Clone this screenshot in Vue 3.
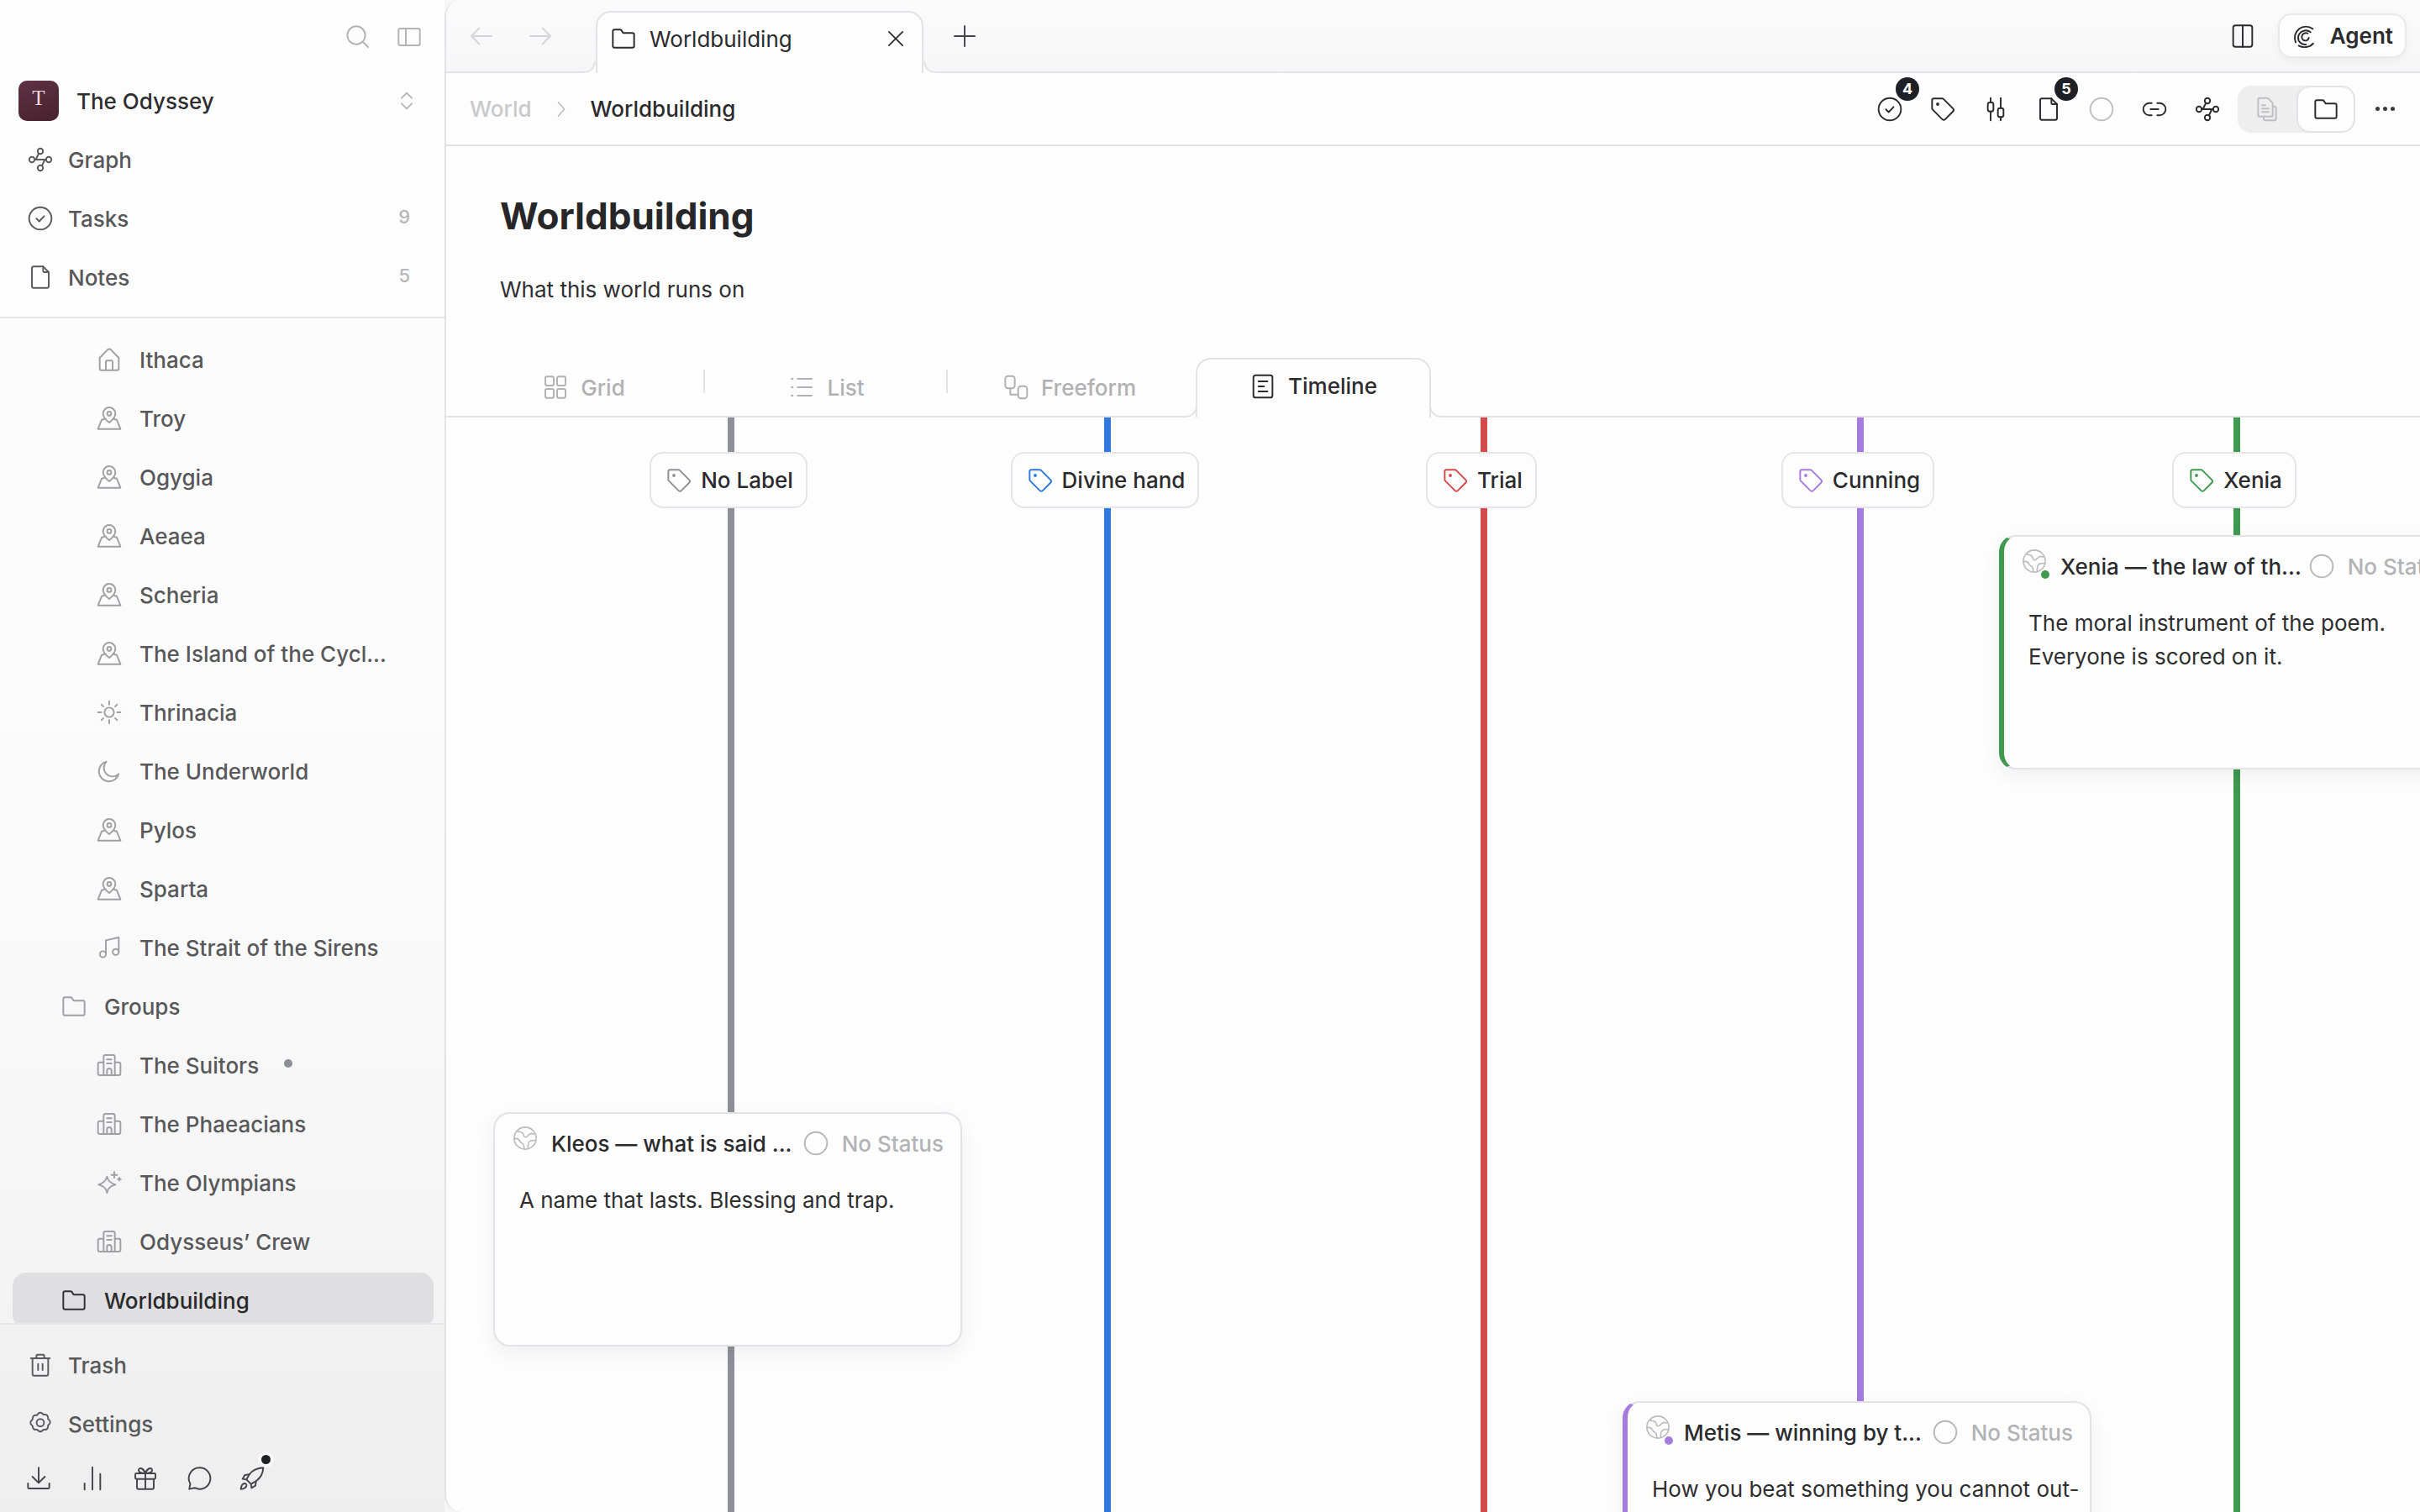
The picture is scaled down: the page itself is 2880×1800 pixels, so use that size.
<script setup>
// icon bodies, all drawn on a 24 unit box
const icons = {
  search: '<circle cx="10.5" cy="10.5" r="8"/><path d="M16.5 16.5 21 21"/>',
  panel: '<rect x="2.5" y="4.5" width="19" height="15" rx="1.5"/><path d="M9 4.5v15"/>',
  updown: '<path d="M7.5 9.5 12 5l4.5 4.5M7.5 14.5 12 19l4.5-4.5"/>',
  graph: '<circle cx="12" cy="4.5" r="2.4"/><circle cx="4.5" cy="12" r="2.4"/><circle cx="19.5" cy="12" r="2.4"/><circle cx="12" cy="19.5" r="2.4"/><path d="M6.9 12h10.2M10.6 6.4 8 12M13.4 17.6 16 12"/>',
  check: '<circle cx="12" cy="12" r="10"/><path d="M8.6 12.2l2.4 2.4 4.4-4.6"/>',
  note: '<path d="M6 2.5h8.5l5 5V20a1.5 1.5 0 0 1-1.5 1.5H6A1.5 1.5 0 0 1 4.5 20V4A1.5 1.5 0 0 1 6 2.5z"/><path d="M14.5 2.5V6.500a1 1 0 0 0 1 1h4"/>',
  home: '<path d="M3.500 10.500 10.500 3.300a2 2 0 0 1 3 0l7 7.200V20a1.500 1.500 0 0 1-1.500 1.500H5A1.500 1.500 0 0 1 3.500 20z"/><path d="M9 21.500V14a1 1 0 0 1 1-1h4a1 1 0 0 1 1 1v7.500"/>',
  pin: '<path d="M12 15.800C9 13.300 6.500 10.700 6.500 7.800a5.500 5.500 0 0 1 11 0c0 2.900-2.500 5.500-5.500 8z"/><circle cx="12" cy="7.800" r="1.800"/><path d="M7.500 12.800 5.300 13.300 2 21.500h20l-3.300-8.200-2.200-.5"/>',
  sun: '<circle cx="12" cy="12" r="4.200"/><path d="M12 2v3M12 19v3M2 12h3M19 12h3M5 5l1.800 1.800M17.200 17.200 19 19M5 19l1.800-1.800M17.200 6.800 19 5"/>',
  moon: '<path d="M20.500 14.500A9 9 0 1 1 9.500 3.500a7.500 7.500 0 0 0 11 11z"/>',
  music: '<path d="M9 18V5.500l11.500-2.500V16"/><circle cx="6.300" cy="18" r="2.700"/><circle cx="17.800" cy="16" r="2.700"/>',
  folder: '<path d="M2.500 5.500A1.500 1.500 0 0 1 4 4h5a1.500 1.500 0 0 1 1.200.6L11.700 7H20a1.500 1.500 0 0 1 1.500 1.500v10A1.500 1.500 0 0 1 20 20H4a1.500 1.500 0 0 1-1.500-1.500z"/>',
  building: '<path d="M7 21V4.500A1.500 1.500 0 0 1 8.500 3h7A1.500 1.500 0 0 1 17 4.500V21"/><path d="M7 9.500H3.500A1.500 1.500 0 0 0 2 11v8.500A1.500 1.500 0 0 0 3.500 21h17a1.500 1.500 0 0 0 1.500-1.500V11a1.500 1.500 0 0 0-1.500-1.500H17"/><path d="M10 7h4M10 10.500h4M10 21v-4a2 2 0 0 1 4 0v4"/>',
  sparkle: '<path d="M10 6.500c.8 3.800 2.600 5.800 7.500 7.200-4.900 1.500-6.700 3.200-7.500 7.300-.8-4.100-2.600-5.800-7.500-7.300C7.400 12.300 9.200 10.300 10 6.500z"/><path d="M16.500 2.500v5M14 5h5M21 7.500v2.600M19.700 8.800h2.600"/>',
  trash: '<path d="M3.500 6h17M8.500 6V3.800a1 1 0 0 1 1-1h5a1 1 0 0 1 1 1V6M5 6v14a1.500 1.500 0 0 0 1.500 1.500h11A1.500 1.500 0 0 0 19 20V6M10 11v5.500M14 11v5.500"/>',
  gear: '<path d="M10.200 2.800a2.500 2.500 0 0 1 3.600 0l1 1h1.500a2.500 2.500 0 0 1 2.500 2.500l.2 1.400 1 1a2.500 2.500 0 0 1 0 3.600l-1 1-.2 1.400a2.500 2.500 0 0 1-2.500 2.500h-1.500l-1 1a2.500 2.500 0 0 1-3.600 0l-1-1H7.700a2.500 2.500 0 0 1-2.500-2.500L5 13.800l-1-1a2.500 2.500 0 0 1 0-3.600l1-1 .2-1.400a2.500 2.500 0 0 1 2.500-2.500h1.500z"/><circle cx="12" cy="11" r="3.300"/>',
  download: '<path d="M12 2.500v13M6.500 10.500l5.500 5.500 5.500-5.500M2.500 16.500v3.500a1 1 0 0 0 1 1h17a1 1 0 0 0 1-1v-3.500"/>',
  bars: '<path d="M5 16.500V22M12 2v20M19 8v14"/>',
  gift: '<rect x="3" y="7.500" width="18" height="5" rx="1"/><path d="M4.500 12.500V20a1.500 1.500 0 0 0 1.500 1.500h12a1.500 1.500 0 0 0 1.500-1.500v-7.500M12 7.500v14M12 7.500C10.500 3 6.500 1.500 6 4.500c-.3 2 2.500 3 6 3zM12 7.500C13.500 3 17.500 1.500 18 4.500c.3 2-2.500 3-6 3z"/>',
  chat: '<path d="M12.500 2.500a9.500 9.500 0 1 1-4.400 17.900L3.200 21.500l.9-4.700A9.500 9.500 0 0 1 12.500 2.500z"/>',
  rocket: '<path d="M22 2.500c-5.500.3-9.800 2.300-12.500 6L7 13l4 4 4.500-2.500c3.700-2.700 6.200-6.500 6.500-12z"/><path d="M9.500 8.500 5.500 9 3.500 12.500 7 13M15.500 14.500 15 18.500 11.500 20.500 11 17"/><path d="M5 16.500c-1.800.5-2.800 2.300-3 5 2.700-.2 4.500-1.200 5-3 .3-1.200-.8-2.300-2-2z"/>',
  tag: '<path d="M4 2.500h7.500a2 2 0 0 1 1.400.6l8.200 8.200a2 2 0 0 1 0 2.800l-6.800 6.800a2 2 0 0 1-2.800 0L3.100 12.500a2 2 0 0 1-.6-1.400V4A1.500 1.500 0 0 1 4 2.500z"/><circle cx="7.500" cy="7.500" r=".7"/>',
  sliders: '<path d="M7.500 2v4M7.500 14v8M16.500 2v9M16.500 19v3"/><rect x="5" y="6" width="5" height="8" rx="1.800"/><rect x="14" y="11" width="5" height="8" rx="1.800"/>',
  link: '<path d="M9.500 6.500H7.500a5.500 5.500 0 0 0 0 11h2M14.500 6.500h2a5.500 5.500 0 0 1 0 11h-2M8.500 12h7"/>',
  docs: '<path d="M5.500 2h7l4.500 4.500V17a1.500 1.500 0 0 1-1.500 1.500h-10A1.500 1.500 0 0 1 4 17V3.500A1.500 1.500 0 0 1 5.500 2z"/><path d="M7.500 8.500h3M7.500 11.500h6M7.500 14.500h6M17 9.500h1.500A1.500 1.500 0 0 1 20 11v9.500a1.500 1.500 0 0 1-1.500 1.500h-8A1.500 1.500 0 0 1 9 20.500v-2"/>',
  split: '<rect x="3.500" y="2.500" width="17" height="19" rx="2"/><path d="M12 2.500v19"/>',
  spiral: '<path d="M19 5.500A10 10 0 0 0 3.800 17.500 M6.500 20.500c4 2.300 10 1.700 13-2"/><path d="M17 8.500a6.800 6.800 0 0 0-11 4.500c-.3 3.800 3 7 7 6.500"/><path d="M14.500 9.500a3.800 3.800 0 0 0-5.300 3c-.1 2.300 2 4 4.300 3.400a3 3 0 0 0 2-2.400"/>',
  grid: '<rect x="3" y="2.500" width="7.500" height="8" rx="1.500"/><rect x="13.500" y="2.500" width="7.500" height="8" rx="1.500"/><rect x="3" y="13.500" width="7.500" height="8" rx="1.500"/><rect x="13.500" y="13.500" width="7.500" height="8" rx="1.500"/>',
  list: '<path d="M8.500 4.500H21M8.500 12H21M8.500 19.500H21M3 4.500h1M3 12h1M3 19.500h1"/>',
  freeform: '<rect x="2.500" y="2" width="8.500" height="11" rx="2.500"/><rect x="14" y="11" width="8" height="11" rx="2.500"/><path d="M7 13v5.500h7"/>',
  timeline: '<rect x="3.500" y="2" width="17" height="20" rx="2"/><path d="M8 7.500h8M8 12h5M8 16.500h8"/>',
  globe: '<circle cx="12" cy="12" r="10.500"/><path d="M4.500 5c2 1.500 3 .5 5 2s0 3.500 2.500 4c2.500.4 3-3.500 6-3.500l2.500.5M2 12.500c2.500-.8 4 .3 5 2.500s3 1.500 3.500 3.500.5 3.500.5 3.500M14.500 22c.5-3 0-4 1-6s3-2 6-2"/>',
  back: '<path d="M21 12H3M10 5l-7 7 7 7"/>',
  forward: '<path d="M3 12h18M14 5l7 7-7 7"/>',
  close: '<path d="M5 5l14 14M19 5 5 19"/>',
  plus: '<path d="M12 3v18M3 12h18"/>',
  chevron: '<path d="M8 3l8 9-8 9"/>',
}

const navTop = [
  { icon: 'graph', label: 'Graph' },
  { icon: 'check', label: 'Tasks', count: 9 },
  { icon: 'note', label: 'Notes', count: 5 },
]

const tree = [
  { icon: 'home', label: 'Ithaca', sub: true },
  { icon: 'pin', label: 'Troy', sub: true },
  { icon: 'pin', label: 'Ogygia', sub: true },
  { icon: 'pin', label: 'Aeaea', sub: true },
  { icon: 'pin', label: 'Scheria', sub: true },
  { icon: 'pin', label: 'The Island of the Cycl...', sub: true },
  { icon: 'sun', label: 'Thrinacia', sub: true },
  { icon: 'moon', label: 'The Underworld', sub: true },
  { icon: 'pin', label: 'Pylos', sub: true },
  { icon: 'pin', label: 'Sparta', sub: true },
  { icon: 'music', label: 'The Strait of the Sirens', sub: true },
  { icon: 'folder', label: 'Groups' },
  { icon: 'building', label: 'The Suitors', sub: true, dot: true },
  { icon: 'building', label: 'The Phaeacians', sub: true },
  { icon: 'sparkle', label: 'The Olympians', sub: true },
  { icon: 'building', label: 'Odysseus’ Crew', sub: true },
  { icon: 'folder', label: 'Worldbuilding', active: true },
]

const columns = [
  {
    label: 'No Label',
    color: '#8e9098',
    card: { top: 827, title: 'Kleos — what is said ...', body: ['A name that lasts. Blessing and trap.'] },
  },
  { label: 'Divine hand', color: '#2f78dc' },
  { label: 'Trial', color: '#d24a4a' },
  {
    label: 'Cunning',
    color: '#a67be0',
    card: { top: 1171, marked: true, title: 'Metis — winning by t...', body: ['How you beat something you cannot out-'] },
  },
  {
    label: 'Xenia',
    color: '#3f9a4f',
    card: { top: 140, marked: true, title: 'Xenia — the law of th...', body: ['The moral instrument of the poem.', 'Everyone is scored on it.'] },
  },
]

const tools = [
  { icon: 'check', badge: 4 },
  { icon: 'tag' },
  { icon: 'sliders' },
  { icon: 'note', badge: 5 },
  { icon: 'circle' },
  { icon: 'link' },
  { icon: 'graph' },
]
icons.circle = '<circle cx="12" cy="12" r="10"/>'

const views = [
  { icon: 'grid', label: 'Grid' },
  { icon: 'list', label: 'List' },
  { icon: 'freeform', label: 'Freeform' },
]
</script>

<template>
  <div class="app">
    <aside class="sidebar">
      <div class="side-top">
        <svg class="ic soft" viewBox="0 0 24 24" v-html="icons.search"></svg>
        <svg class="ic soft" viewBox="0 0 24 24" v-html="icons.panel"></svg>
      </div>
      <div class="workspace">
        <span class="avatar">T</span>
        <span class="ws-name">The Odyssey</span>
        <svg class="ic soft updown" viewBox="0 0 24 24" v-html="icons.updown"></svg>
      </div>
      <div v-for="item in navTop" :key="item.label" class="nav-row">
        <svg class="ic" viewBox="0 0 24 24" v-html="icons[item.icon]"></svg>
        <span class="nav-label">{{ item.label }}</span>
        <span v-if="item.count" class="count">{{ item.count }}</span>
      </div>

      <div class="tree">
        <div
          v-for="row in tree"
          :key="row.label"
          class="tree-row"
          :class="{ sub: row.sub, active: row.active }"
        >
          <svg class="ic" viewBox="0 0 24 24" v-html="icons[row.icon]"></svg>
          <span class="tree-label">{{ row.label }}</span>
          <span v-if="row.dot" class="tree-dot"></span>
        </div>
      </div>

      <div class="side-foot">
        <div class="nav-row">
          <svg class="ic" viewBox="0 0 24 24" v-html="icons.trash"></svg>
          <span class="nav-label">Trash</span>
        </div>
        <div class="nav-row">
          <svg class="ic" viewBox="0 0 24 24" v-html="icons.gear"></svg>
          <span class="nav-label">Settings</span>
        </div>
        <div class="foot-icons">
          <svg class="ic" viewBox="0 0 24 24" v-html="icons.download"></svg>
          <svg class="ic" viewBox="0 0 24 24" v-html="icons.bars"></svg>
          <svg class="ic" viewBox="0 0 24 24" v-html="icons.gift"></svg>
          <svg class="ic" viewBox="0 0 24 24" v-html="icons.chat"></svg>
          <span class="rocket">
            <svg class="ic" viewBox="0 0 24 24" v-html="icons.rocket"></svg>
            <i class="rocket-dot"></i>
          </span>
        </div>
      </div>
    </aside>

    <main class="main">
      <div class="tabbar">
        <svg class="ic faint" viewBox="0 0 24 24" v-html="icons.back"></svg>
        <svg class="ic faint" viewBox="0 0 24 24" v-html="icons.forward"></svg>
        <div class="tab">
          <i class="flare left"></i>
          <svg class="ic" viewBox="0 0 24 24" v-html="icons.folder"></svg>
          <span class="tab-label">Worldbuilding</span>
          <svg class="ic tab-close" viewBox="0 0 24 24" v-html="icons.close"></svg>
          <i class="flare right"></i>
        </div>
        <svg class="ic tab-plus" viewBox="0 0 24 24" v-html="icons.plus"></svg>
        <div class="tabbar-right">
          <svg class="ic" viewBox="0 0 24 24" v-html="icons.split"></svg>
          <button class="agent">
            <svg class="ic" viewBox="0 0 24 24" v-html="icons.spiral"></svg>
            Agent
          </button>
        </div>
      </div>

      <div class="crumbbar">
        <span class="crumb-muted">World</span>
        <svg class="ic crumb-sep" viewBox="0 0 24 24" v-html="icons.chevron"></svg>
        <span class="crumb-now">Worldbuilding</span>
        <div class="crumb-right">
          <div class="tools">
            <span v-for="tool in tools" :key="tool.icon + tool.badge" class="tool">
              <svg class="ic" :class="{ ghost: tool.icon === 'circle' }" viewBox="0 0 24 24" v-html="icons[tool.icon]"></svg>
              <b v-if="tool.badge" class="badge">{{ tool.badge }}</b>
            </span>
          </div>
          <div class="segment">
            <span class="seg-item"><svg class="ic ghost" viewBox="0 0 24 24" v-html="icons.docs"></svg></span>
            <span class="seg-item on"><svg class="ic" viewBox="0 0 24 24" v-html="icons.folder"></svg></span>
          </div>
          <span class="dots"><i></i><i></i><i></i></span>
        </div>
      </div>

      <header class="page-head">
        <h1>Worldbuilding</h1>
        <p>What this world runs on</p>
      </header>

      <div class="view-strip">
        <div class="view-list">
          <div v-for="v in views" :key="v.label" class="view-item">
            <svg class="ic" viewBox="0 0 24 24" v-html="icons[v.icon]"></svg>
            <span>{{ v.label }}</span>
          </div>
        </div>
        <div class="view-on">
          <svg class="ic" viewBox="0 0 24 24" v-html="icons.timeline"></svg>
          <span>Timeline</span>
        </div>
        <div class="view-rest"></div>
      </div>

      <div class="timeline">
        <div v-for="col in columns" :key="col.label" class="col">
          <span class="col-line" :style="{ background: col.color }"></span>
          <div class="chip">
            <svg class="ic" :style="{ color: col.color }" viewBox="0 0 24 24" v-html="icons.tag"></svg>
            <span>{{ col.label }}</span>
          </div>
          <article
            v-if="col.card"
            class="card"
            :style="{ top: col.card.top + 'px', borderLeftColor: col.card.marked ? col.color : undefined }"
            :class="{ marked: col.card.marked }"
          >
            <div class="card-head">
              <span class="globe">
                <svg class="ic" viewBox="0 0 24 24" v-html="icons.globe"></svg>
                <i v-if="col.card.marked" class="globe-dot" :style="{ background: col.color }"></i>
              </span>
              <span class="card-title">{{ col.card.title }}</span>
              <span class="status">
                <svg class="ic" viewBox="0 0 24 24" v-html="icons.circle"></svg>
                No Status
              </span>
            </div>
            <div class="card-body">
              <p v-for="line in col.card.body" :key="line">{{ line }}</p>
            </div>
          </article>
        </div>
      </div>
    </main>
  </div>
</template>

<style>
html,
body {
  margin: 0;
  background: #f6f6f7;
}
</style>

<style scoped>
.app {
  display: flex;
  width: 2880px;
  height: 1800px;
  overflow: hidden;
  font-family: Inter, 'Liberation Sans', sans-serif;
  font-size: 26px;
  color: #2b2b2d;
}

.ic {
  display: block;
  flex: none;
  width: 32px;
  height: 32px;
  fill: none;
  stroke: currentColor;
  stroke-width: 1.45;
  stroke-linecap: round;
  stroke-linejoin: round;
}

/* 側邊欄 */
.sidebar {
  display: flex;
  flex-direction: column;
  flex: none;
  width: 529px;
  height: 1800px;
  background: linear-gradient(180deg, #fdfdfd 0%, #fbfbfb 55%, #f0f0f1 100%);
  color: #58585b;
  font-weight: 500;
}

.side-top {
  display: flex;
  align-items: center;
  justify-content: flex-end;
  gap: 29px;
  flex: none;
  height: 88px;
  padding-right: 26px;
}

.soft {
  color: #b4b4b6;
}

.workspace {
  display: flex;
  align-items: center;
  flex: none;
  height: 64px;
  margin-bottom: 3px;
  padding: 0 29px 0 22px;
}

.avatar {
  display: flex;
  align-items: center;
  justify-content: center;
  width: 48px;
  height: 48px;
  padding-bottom: 6px;
  box-sizing: border-box;
  border-radius: 10px;
  background: linear-gradient(160deg, #5e3242, #46222e);
  color: #f3d9de;
  font-family: 'Liberation Serif', serif;
  font-size: 25px;
  font-weight: 400;
}

.ws-name {
  margin-left: 21px;
  color: #2e2e30;
}

.updown {
  margin-left: auto;
}

.nav-row {
  display: flex;
  align-items: center;
  flex: none;
  gap: 17px;
  height: 70px;
  padding: 0 41px 0 32px;
}

.nav-row .ic {
  color: #5a5a5d;
}

.count {
  margin-left: auto;
  margin-top: -5px;
  color: #b6b6b9;
  font-size: 22px;
}

.tree {
  flex: 1;
  min-height: 0;
  overflow: hidden;
  margin-top: 12px;
  padding-top: 14px;
  border-top: 2px solid #e6e6e8;
}

.tree-row {
  display: flex;
  align-items: center;
  gap: 20px;
  height: 70px;
  padding-left: 72px;
  box-sizing: border-box;
}

.tree-row.sub {
  padding-left: 114px;
}

.tree-row .ic {
  color: #a0a0a3;
}

.tree-row.active {
  height: 66px;
  margin: 2px 13px 2px 15px;
  padding-left: 57px;
  border-radius: 16px;
  background: #dfdfe1;
  color: #29292b;
}

.tree-row.active .ic {
  color: #303032;
}

.tree-dot {
  width: 10px;
  height: 10px;
  margin: -4px 0 0 10px;
  border-radius: 50%;
  background: #8d8f96;
}

.side-foot {
  flex: none;
  height: 225px;
  box-sizing: border-box;
  padding-top: 13px;
  border-top: 2px solid #e6e6e8;
  background: linear-gradient(180deg, #f1f1f1, #eeeeee);
}

.foot-icons {
  display: flex;
  align-items: center;
  gap: 31.5px;
  height: 60px;
  padding-left: 30px;
  color: #454548;
}

.rocket {
  position: relative;
}

.rocket-dot {
  position: absolute;
  top: -16px;
  right: -10px;
  width: 11px;
  height: 11px;
  border: 4px solid #f8f8f8;
  border-radius: 50%;
  background: #1f2026;
}

/* 主要區域 */
.main {
  flex: 1;
  min-width: 0;
  display: flex;
  flex-direction: column;
  overflow: hidden;
  border-left: 2px solid #e3e3e5;
  border-radius: 20px 0 0 20px;
  background: #fdfdfd;
}

.tabbar {
  display: flex;
  align-items: center;
  flex: none;
  height: 87px;
  box-sizing: border-box;
  padding: 0 16px 0 26px;
  gap: 38px;
  border-bottom: 2px solid #e3e3e5;
  background: linear-gradient(180deg, #fbfbfb, #f6f6f7);
}

.faint {
  color: #d4d4d6;
}

.tab {
  position: relative;
  display: flex;
  align-items: center;
  align-self: flex-end;
  width: 390px;
  height: 74px;
  margin: 0 0 -2px 12px;
  padding: 0 17px 10px 15px;
  box-sizing: border-box;
  border: 2px solid #e3e3e5;
  border-bottom: 0;
  border-radius: 18px 18px 0 0;
  background: #fdfdfd;
}

.tab-label {
  margin-left: 15px;
}

.tab-close {
  width: 28px;
  height: 28px;
  margin-left: auto;
}

.flare {
  position: absolute;
  bottom: 0;
  width: 14px;
  height: 14px;
  background: #fdfdfd;
}

.flare.left {
  left: -16px;
}

.flare.right {
  right: -16px;
}

.flare::before {
  content: '';
  position: absolute;
  inset: 0;
  box-sizing: border-box;
  border-bottom: 2px solid #e3e3e5;
  background: #f6f6f7;
}

.flare.left::before {
  border-right: 2px solid #e3e3e5;
  border-bottom-right-radius: 14px;
}

.flare.right::before {
  border-left: 2px solid #e3e3e5;
  border-bottom-left-radius: 14px;
}

.tab-plus {
  margin-left: -5px;
  color: #454548;
}

.tabbar-right {
  display: flex;
  align-items: center;
  gap: 26px;
  margin-left: auto;
}

.agent {
  display: flex;
  align-items: center;
  gap: 14px;
  height: 53px;
  padding: 0 14px 0 14px;
  border: 2px solid #e9e9eb;
  border-radius: 16px;
  background: #fdfdfd;
  box-shadow: 0 3px 10px rgba(0, 0, 0, 0.05);
  color: #2b2b2d;
  font: 600 26px Inter, sans-serif;
}

.crumbbar {
  display: flex;
  align-items: center;
  flex: none;
  height: 87px;
  box-sizing: border-box;
  padding: 0 25px 0 28px;
  border-bottom: 2px solid #e3e3e5;
}

.crumb-muted {
  color: #c9c9cb;
  font-weight: 500;
}

.crumb-sep {
  width: 22px;
  height: 22px;
  margin: 0 24px;
  color: #b9b9bb;
}

.crumb-now {
  font-weight: 500;
}

.crumb-right {
  display: flex;
  align-items: center;
  gap: 18px;
  margin-left: auto;
}

.tools {
  display: flex;
  align-items: center;
  gap: 31px;
  margin-right: 2px;
}

.tool {
  position: relative;
}

.ghost {
  color: #bfbfc1;
}

.badge {
  position: absolute;
  top: -22px;
  right: -19px;
  display: flex;
  align-items: center;
  justify-content: center;
  width: 28px;
  height: 28px;
  border-radius: 50%;
  background: #1f2026;
  color: #fff;
  font-size: 18px;
  font-weight: 700;
}

.segment {
  display: flex;
  width: 140px;
  height: 56px;
  border-radius: 16px;
  background: #eeeeef;
}

.seg-item {
  display: flex;
  align-items: center;
  justify-content: center;
  width: 70px;
  height: 56px;
  box-sizing: border-box;
  border-radius: 16px;
}

.seg-item.on {
  border: 2px solid #e3e3e5;
  background: #fdfdfd;
}

.dots {
  display: flex;
  align-items: center;
  justify-content: center;
  gap: 4px;
  width: 34px;
}

.dots i {
  width: 5px;
  height: 5px;
  border-radius: 50%;
  background: #3a3a3c;
}

.page-head {
  flex: none;
  padding: 53px 0 0 64px;
}

.page-head h1 {
  margin: 0;
  font-size: 44px;
  line-height: 60px;
  font-weight: 700;
  color: #27272a;
}

.page-head p {
  margin: 38px 0 0;
  font-size: 26px;
  line-height: 40px;
  color: #2e2e30;
}

.view-strip {
  display: flex;
  flex: none;
  height: 71px;
  margin-top: 61px;
}

.view-list {
  display: flex;
  flex: none;
  width: 894px;
  height: 51px;
  margin-top: 20px;
  padding-left: 19px;
  box-sizing: border-box;
  border-right: 2px solid #e3e3e5;
  border-bottom: 2px solid #e3e3e5;
  border-bottom-right-radius: 14px;
}

.view-item {
  position: relative;
  display: flex;
  align-items: center;
  justify-content: center;
  gap: 14px;
  width: 289px;
  height: 30px;
  color: #b1b1b4;
  font-weight: 500;
}

.view-item:not(:last-child)::after {
  content: '';
  position: absolute;
  top: -6px;
  right: 0;
  width: 2px;
  height: 28px;
  background: #e3e3e5;
}

.view-on {
  display: flex;
  align-items: center;
  justify-content: center;
  gap: 14px;
  flex: none;
  width: 280px;
  height: 71px;
  margin-left: -2px;
  padding-bottom: 6px;
  box-sizing: border-box;
  border: 2px solid #e3e3e5;
  border-bottom: 0;
  border-radius: 18px 18px 0 0;
  font-weight: 500;
}

.view-rest {
  flex: 1;
  height: 51px;
  margin: 20px 0 0 -2px;
  box-sizing: border-box;
  border-left: 2px solid #e3e3e5;
  border-bottom: 2px solid #e3e3e5;
  border-bottom-left-radius: 14px;
}

/* 時間軸 */
.timeline {
  flex: 1;
  min-height: 0;
  display: flex;
  overflow: hidden;
  padding-left: 112px;
}

.col {
  position: relative;
  display: flex;
  flex-direction: column;
  align-items: center;
  flex: none;
  width: 448px;
}

.col-line {
  position: absolute;
  top: 0;
  bottom: 0;
  left: calc(50% - 1px);
  width: 8px;
}

.chip {
  position: relative;
  display: flex;
  align-items: center;
  gap: 10px;
  height: 67px;
  margin-top: 41px;
  padding: 0 15px 0 17px;
  box-sizing: border-box;
  border: 2px solid #e5e5e7;
  border-radius: 16px;
  background: #fdfdfd;
  font-weight: 500;
}

.card {
  position: absolute;
  left: -56px;
  width: 558px;
  height: 279px;
  box-sizing: border-box;
  border: 2px solid #e3e3e5;
  border-radius: 20px;
  background: #fdfdfd;
  box-shadow: 0 8px 24px rgba(0, 0, 0, 0.06);
}

.card.marked {
  border-left-width: 6px;
}

.card-head {
  display: flex;
  align-items: center;
  height: 38px;
  padding: 16px 20px 0 21px;
}

.globe {
  position: relative;
  margin: -12px 16px 0 0;
}

.globe .ic {
  width: 30px;
  height: 30px;
  color: #bbbbbe;
  stroke-width: 1.3;
}

.globe-dot {
  position: absolute;
  right: -3px;
  bottom: -6px;
  width: 10px;
  height: 10px;
  border-radius: 50%;
}

.card-title {
  flex: 1;
  min-width: 0;
  white-space: nowrap;
  font-weight: 500;
}

.status {
  display: flex;
  align-items: center;
  gap: 17px;
  color: #b3b3b6;
  font-weight: 500;
}

.status .ic {
  width: 32px;
  height: 32px;
  margin: 0 -2px;
  color: #b8b8bb;
}

.card-body {
  margin-top: 29px;
  padding: 0 20px 0 29px;
  line-height: 40px;
  color: #2e2e30;
}

.card-body p {
  margin: 0;
  white-space: nowrap;
}
</style>
